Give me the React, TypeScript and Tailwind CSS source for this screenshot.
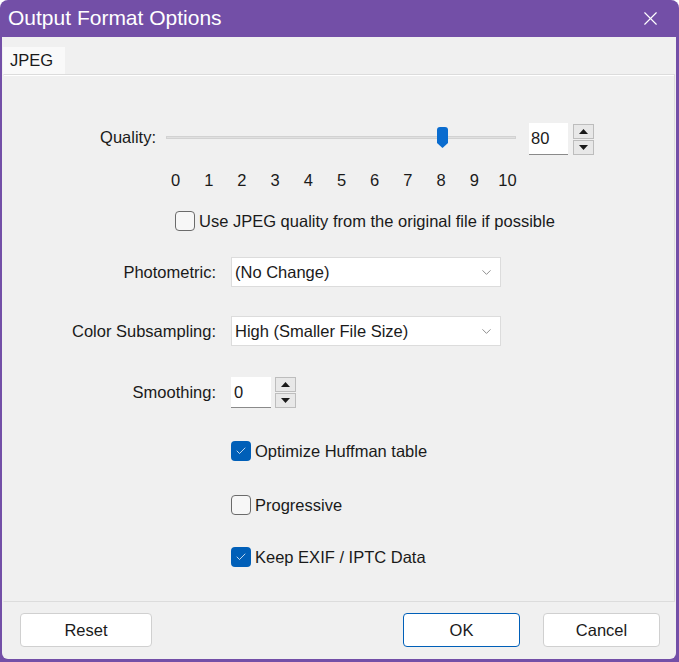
import { X, ChevronDown, Check } from "lucide-react";

const TICKS = ["0", "1", "2", "3", "4", "5", "6", "7", "8", "9", "10"];

function SpinButtons() {
  return (
    <div className="flex flex-col gap-[1px] w-[21px]">
      <div className="h-[15px] bg-[#e8e8e8] border border-[#bdbdbd] flex items-center justify-center">
        <svg width="9" height="5" viewBox="0 0 9 5">
          <path d="M0 5 L4.5 0 L9 5 Z" fill="#1a1a1a" />
        </svg>
      </div>
      <div className="h-[15px] bg-[#e8e8e8] border border-[#bdbdbd] flex items-center justify-center">
        <svg width="9" height="5" viewBox="0 0 9 5">
          <path d="M0 0 L9 0 L4.5 5 Z" fill="#1a1a1a" />
        </svg>
      </div>
    </div>
  );
}

function CheckBox({ checked }: { checked: boolean }) {
  return checked ? (
    <div className="w-[20px] h-[20px] rounded-[4px] bg-[#005fb8] flex items-center justify-center shrink-0">
      <Check size={12} strokeWidth={1.5} color="#ffffff" />
    </div>
  ) : (
    <div className="w-[20px] h-[20px] rounded-[4px] bg-[#f7f7f7] border border-[#6b6b6b] shrink-0" />
  );
}

function CheckRow({ checked, label }: { checked: boolean; label: string }) {
  return (
    <div className="h-[20px] flex items-center gap-[4px]">
      <CheckBox checked={checked} />
      <span className="leading-[20px]">{label}</span>
    </div>
  );
}

function Combo({ value }: { value: string }) {
  return (
    <div className="w-[270px] h-[30px] bg-white border border-[#dcdcdc] flex items-center pl-[3px] pr-[6px]">
      <span className="flex-1">{value}</span>
      <ChevronDown size={15} strokeWidth={1.2} color="#6a6a6a" />
    </div>
  );
}

function DialogButton({ label, primary, wide }: { label: string; primary?: boolean; wide?: boolean }) {
  return (
    <button
      className={
        primary
          ? "w-[117px] h-[34px] bg-white rounded-[4px] border border-[#005fb8] text-[#1a1a1a]"
          : wide
            ? "w-[132px] h-[34px] bg-white rounded-[4px] border border-[#d0d0d0] text-[#1a1a1a]"
            : "w-[117px] h-[34px] bg-white rounded-[4px] border border-[#d0d0d0] text-[#1a1a1a]"
      }
    >
      {label}
    </button>
  );
}

export default function App() {
  return (
    <div
      className="w-[679px] h-[662px] bg-[#734fa7] rounded-t-[8px] flex flex-col pl-[2px] pr-[3px] pb-[3px] text-[16.5px] text-[#1a1a1a]"
      style={{ fontFamily: '"Liberation Sans", Arial, sans-serif' }}
    >
      {/* Title bar */}
      <div className="h-[37px] flex items-center justify-between pl-[6px] pr-[14px] shrink-0">
        <span className="text-[21px] text-white leading-none pb-[2px]">Output Format Options</span>
        <X size={23} strokeWidth={1.2} color="#ffffff" />
      </div>

      {/* Body */}
      <div className="flex-1 bg-[#f0f0f0] rounded-b-[6px] flex flex-col">
        {/* Tabs */}
        <div className="h-[37px] flex items-end pl-[1px] shrink-0">
          <div className="w-[62px] h-[27px] bg-[#f9f9f9] flex items-center pl-[7px]">JPEG</div>
        </div>

        {/* Tab panel */}
        <div className="h-[528px] mx-[1px] border-t border-b border-r border-[#dcdcdc] border-l border-l-[#f0f0f0] shadow-[inset_0_1px_0_#ffffff] flex flex-col">
          {/* Quality */}
          <div className="flex items-center mt-[48px] h-[32px]">
            <div className="w-[152px] text-right pb-[3px]">Quality:</div>
            <div className="ml-[10px] w-[350px] h-[22px] relative flex items-center pb-[4px]">
              <div className="w-full h-[3px] bg-[#e0e0e0] border border-[#d2d2d2]" />
              <svg className="absolute left-[271px] top-[-1px]" width="11" height="21" viewBox="0 0 11 21">
                <path d="M0 3 Q0 0 3 0 L8 0 Q11 0 11 3 L11 16 L5.5 21 L0 16 Z" fill="#0a6ccf" />
              </svg>
            </div>
            <div className="ml-[13px] w-[39px] h-[32px] bg-white border-b border-[#8a8a8a] flex items-center pl-[2px]">80</div>
            <div className="ml-[5px]">
              <SpinButtons />
            </div>
          </div>

          {/* Tick labels */}
          <div className="grid grid-cols-11 w-[365px] h-[20px] leading-[20px] ml-[155px] mt-[15px] text-center">
            {TICKS.map((t) => (
              <span key={t}>{t}</span>
            ))}
          </div>

          {/* Original quality */}
          <div className="ml-[171px] mt-[21px]">
            <CheckRow checked={false} label="Use JPEG quality from the original file if possible" />
          </div>

          {/* Photometric */}
          <div className="flex items-center mt-[26px]">
            <div className="w-[212px] text-right">Photometric:</div>
            <div className="ml-[15px]">
              <Combo value="(No Change)" />
            </div>
          </div>

          {/* Color Subsampling */}
          <div className="flex items-center mt-[29px]">
            <div className="w-[212px] text-right">Color Subsampling:</div>
            <div className="ml-[15px]">
              <Combo value="High (Smaller File Size)" />
            </div>
          </div>

          {/* Smoothing */}
          <div className="flex items-center mt-[31px]">
            <div className="w-[212px] text-right">Smoothing:</div>
            <div className="ml-[15px] w-[40px] h-[31px] bg-white border-b border-[#8a8a8a] flex items-center pl-[3px]">0</div>
            <div className="ml-[4px]">
              <SpinButtons />
            </div>
          </div>

          {/* Options */}
          <div className="flex flex-col ml-[227px] mt-[33px]">
            <CheckRow checked label="Optimize Huffman table" />
            <div className="mt-[34px]">
              <CheckRow checked={false} label="Progressive" />
            </div>
            <div className="mt-[32px]">
              <CheckRow checked label="Keep EXIF / IPTC Data" />
            </div>
          </div>
        </div>

        {/* Footer buttons */}
        <div className="flex items-center pt-[11px] pl-[18px] pr-[16px]">
          <DialogButton label="Reset" wide />
          <div className="flex-1" />
          <DialogButton label="OK" primary />
          <div className="w-[23px]" />
          <DialogButton label="Cancel" />
        </div>
      </div>
    </div>
  );
}
